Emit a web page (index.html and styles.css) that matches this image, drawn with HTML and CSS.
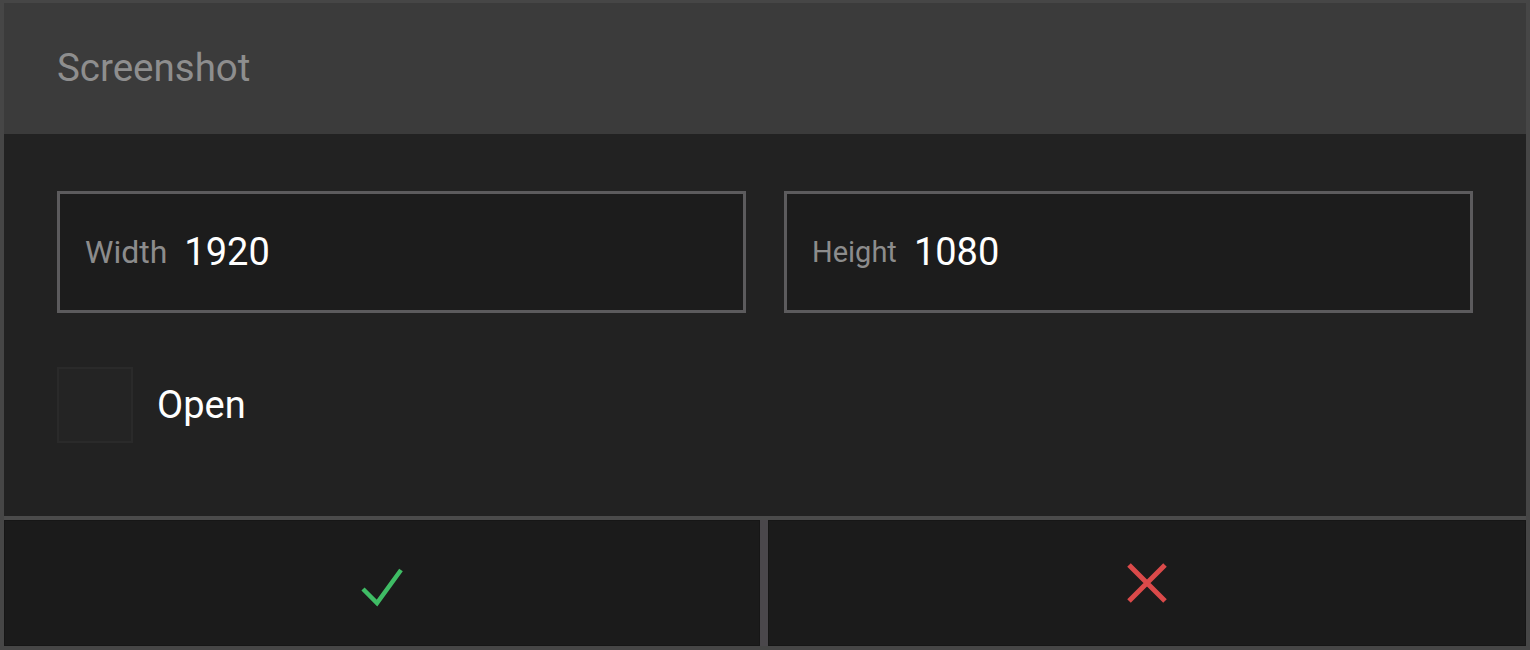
FILE: index.html
```html
<!DOCTYPE html>
<html>
<head>
<meta charset="utf-8">
<link rel="stylesheet" href="styles.css">
</head>
<body>
<div class="dialog">
  <div class="header"><span class="title">Screenshot</span></div>
  <div class="content">
    <div class="fields">
      <label class="field"><span class="label label-lg">Width</span><span class="value">1920</span></label>
      <label class="field"><span class="label">Height</span><span class="value">1080</span></label>
    </div>
    <div class="check-row">
      <span class="checkbox"></span>
      <span class="check-label">Open</span>
    </div>
  </div>
  <div class="footer">
    <button class="btn">
      <svg width="48" height="48" viewBox="0 0 48 48"><path d="M5 30 L19 44 L43 11" fill="none" stroke="#3fbc65" stroke-width="4.5" stroke-linejoin="miter"/></svg>
    </button>
    <button class="btn">
      <svg width="48" height="48" viewBox="0 0 48 48"><path d="M6 6 L42 42 M42 6 L6 42" fill="none" stroke="#da4a4a" stroke-width="5"/></svg>
    </button>
  </div>
</div>
</body>
</html>
```
FILE: styles.css
```css
html, body {
  margin: 0;
  padding: 0;
  background: #464646;
}
.dialog {
  width: 1530px;
  height: 650px;
  box-sizing: border-box;
  border: 4px solid #464646;
  border-top-width: 3px;
  display: flex;
  flex-direction: column;
  font-family: Roboto, "Noto Sans", sans-serif;
  background: #222222;
}
.header {
  height: 131px;
  flex: none;
  background: #3b3b3b;
  display: flex;
  align-items: center;
  padding-left: 53px;
  box-sizing: border-box;
}
.title {
  color: #8e8e8e;
  font-size: 38.5px;
  padding-bottom: 2px;
}
.content {
  flex: 1;
  background: #222222;
  padding: 57px 53px 0 53px;
  box-sizing: border-box;
}
.fields {
  display: grid;
  grid-template-columns: 1fr 1fr;
  gap: 38px;
}
.field {
  height: 122px;
  box-sizing: border-box;
  border: 3px solid #5c5b5d;
  background: #1c1c1c;
  display: flex;
  align-items: center;
  padding-left: 25px;
  gap: 17px;
}
.label {
  color: #8c8c8c;
  font-size: 29px;
}
.label-lg {
  font-size: 32px;
}
.value {
  color: #ffffff;
  font-size: 38px;
}
.check-row {
  display: flex;
  align-items: center;
  margin-top: 54px;
  gap: 24px;
}
.checkbox {
  width: 76px;
  height: 76px;
  box-sizing: border-box;
  background: #242424;
  border: 2px solid #2a2a2a;
}
.check-label {
  color: #ffffff;
  font-size: 38px;
}
.footer {
  flex: none;
  height: 130px;
  box-sizing: border-box;
  border-top: 4px solid #4b4b4b;
  background: #4a474b;
  display: grid;
  grid-template-columns: 756px 1fr;
  gap: 8px;
}
.btn {
  border: 1px solid #161616;
  background: #1b1b1b;
  margin: 0;
  padding: 0;
  display: flex;
  align-items: center;
  justify-content: center;
}
.btn svg {
  display: block;
}
```
